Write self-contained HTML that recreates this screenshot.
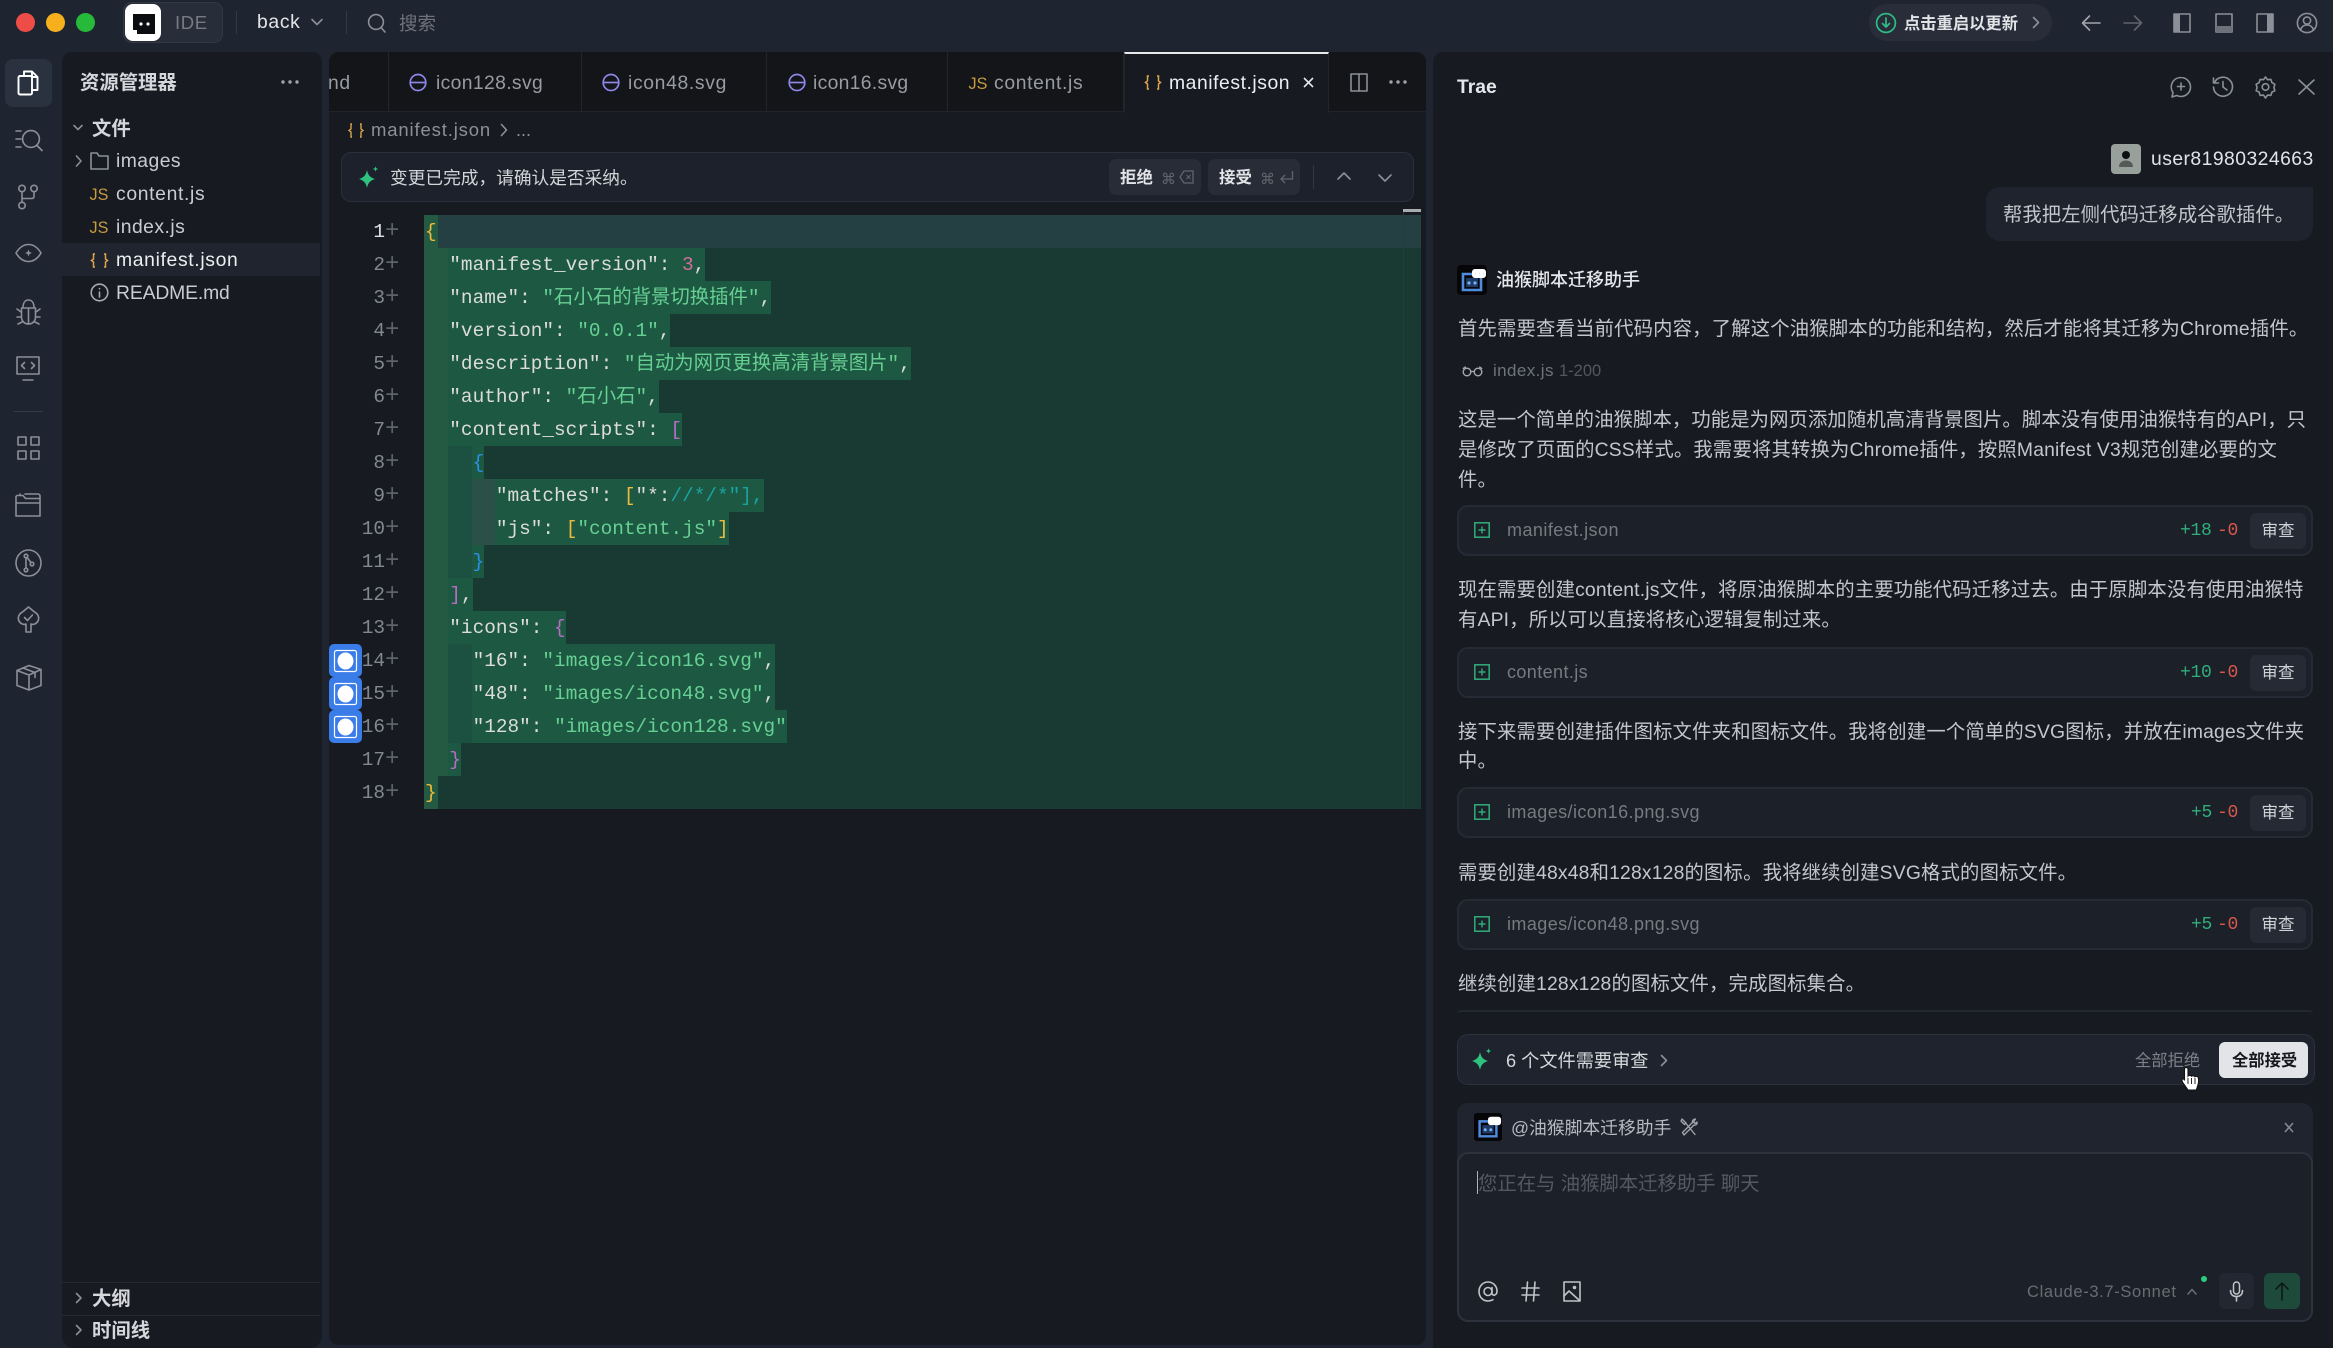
<!DOCTYPE html>
<html lang="zh">
<head>
<meta charset="utf-8">
<title>Trae</title>
<style>
html,body{margin:0;padding:0;width:2333px;height:1348px;overflow:hidden;background:#1e2530}
body{position:relative;font-family:"Liberation Sans","Noto Sans CJK SC",sans-serif;font-size:19.35px;color:#c9ccd2}
.b{position:absolute;box-sizing:border-box}
.t{position:absolute;white-space:nowrap;height:30px;line-height:30px;margin-top:-14px}
.la{margin-top:-15px}
svg{position:absolute;overflow:visible}
.s{fill:none;stroke:#8b8f97;stroke-width:1.6;stroke-linecap:round;stroke-linejoin:round}
.f{letter-spacing:.65px;margin-top:-15px}
.w{font-weight:700}
.l{position:absolute;left:424px;height:33px;line-height:35px;white-space:pre;font-family:"Liberation Mono","Noto Sans CJK SC",monospace;font-size:19.4px;color:#dcdcdc;display:flex}
.l span.c{display:block;background:#1d5842;padding-left:1px;height:33px}
.ind{display:block;height:33px}
.i0{width:24.3px;background:#245a41}
.i1{width:23.3px;background:#1c5040}
.i2{width:23.3px;background:#2b5048}
.g{color:#66d093}.y{color:#edb93f}.p{color:#b76cc4}.u{color:#2a8fe6}.n{color:#d0709a}.q{color:#1aa3a3}
.ln{position:absolute;left:340px;width:45px;text-align:right;height:33px;line-height:35px;font-family:"Liberation Mono",monospace;font-size:19.4px;color:#83878e}
.pl{position:absolute;left:385px;height:33px;line-height:34px;font-family:"Liberation Mono",monospace;font-size:24px;color:#5e626a}
.card{position:absolute;left:1457px;width:856px;height:51px;box-sizing:border-box;background:#1c2029;border:2px solid #252a35;border-radius:11px}
.rv{position:absolute;left:2250px;width:56px;height:36px;background:#262a35;border-radius:6px;font-size:16.5px;line-height:36px;text-align:center;color:#d0d2d6}
.tab{position:absolute;top:52px;height:60px;box-sizing:border-box;border-right:1px solid #22252b}
.tt{color:#989ba1}
.m{font-family:"Liberation Mono",monospace;font-size:19px}
.ct{color:#c3c6cb;letter-spacing:.17px}
</style>
</head>
<body>

<!-- title bar -->
<div class="b" style="left:16px;top:13px;width:19px;height:19px;border-radius:50%;background:#ee4c47"></div>
<div class="b" style="left:46px;top:13px;width:19px;height:19px;border-radius:50%;background:#f6b01e"></div>
<div class="b" style="left:76px;top:13px;width:19px;height:19px;border-radius:50%;background:#27b93a"></div>
<div class="b" style="left:123px;top:2px;width:100px;height:41px;border-radius:9px;background:#282e39;border:1px solid #323844"></div>
<div class="b" style="left:125px;top:4px;width:36px;height:37px;border-radius:8px;background:#fff"></div>
<svg style="left:125px;top:4px" width="36" height="37" viewBox="0 0 36 37"><path d="M8 10h22v20H12v-4H8z" fill="#0c0d10"/><rect x="12" y="14" width="14" height="11" fill="#0c0d10"/><circle cx="16" cy="20" r="1.600" fill="#fff"/><circle cx="23" cy="20" r="1.600" fill="#fff"/></svg>
<div class="t la" style="left:175px;top:23px;font-size:18.5px;color:#767a82;letter-spacing:.6px">IDE</div>
<div class="b" style="left:236px;top:11px;width:1px;height:23px;background:#343a45"></div>
<div class="t f" style="left:257px;top:22px;color:#e4e5e8">back</div>
<svg style="left:311px;top:18px" width="12" height="8" viewBox="0 0 12 8"><path class="s" d="M1 1.5l5 5 5-5"/></svg>
<div class="b" style="left:346px;top:11px;width:1px;height:23px;background:#343a45"></div>
<svg style="left:367px;top:12px" width="20" height="22" viewBox="0 0 20 22"><circle class="s" cx="9" cy="10" r="7.4"/><path class="s" d="M14.5 16l3.5 4"/></svg>
<div class="t" style="left:399px;top:23px;font-size:18.5px;color:#6e727a">搜索</div>

<div class="b" style="left:1869px;top:4px;width:183px;height:37px;border-radius:18px;background:#282d39"></div>
<svg style="left:1875px;top:12px" width="22" height="22" viewBox="0 0 22 22"><circle cx="11" cy="11" r="9.4" fill="none" stroke="#2ebd85" stroke-width="1.7"/><path d="M11 6v9M7.5 11.5L11 15l3.5-3.5" fill="none" stroke="#2ebd85" stroke-width="1.7" stroke-linecap="round"/></svg>
<div class="t" style="left:1904px;top:23px;font-size:16.3px;font-weight:600;color:#e2e3e6">点击重启以更新</div>
<svg style="left:2032px;top:16px" width="8" height="13" viewBox="0 0 8 13"><path class="s" d="M1.5 1.5l5 5-5 5"/></svg>
<svg style="left:2081px;top:14px" width="20" height="18" viewBox="0 0 20 18"><path class="s" stroke-width="1.8" style="stroke:#a2a5ab" d="M19 9H2M8.5 2L1.5 9l7 7"/></svg>
<svg style="left:2123px;top:14px" width="20" height="18" viewBox="0 0 20 18"><path class="s" style="stroke:#5f636b" d="M1 9h17M11.5 2l7 7-7 7"/></svg>
<svg style="left:2173px;top:13px" width="18" height="20" viewBox="0 0 18 20"><rect class="s" x="1" y="1" width="16" height="18"/><rect x="1" y="1" width="6" height="18" fill="#8b8f97"/></svg>
<svg style="left:2215px;top:13px" width="18" height="20" viewBox="0 0 18 20"><rect class="s" x="1" y="1" width="16" height="18"/><rect x="1" y="13" width="16" height="6" fill="#6d7179"/></svg>
<svg style="left:2256px;top:13px" width="18" height="20" viewBox="0 0 18 20"><rect class="s" x="1" y="1" width="16" height="18"/><rect x="11" y="1" width="6" height="18" fill="#8b8f97"/></svg>
<svg style="left:2296px;top:12px" width="22" height="22" viewBox="0 0 22 22"><circle class="s" cx="11" cy="11" r="9.6"/><circle class="s" cx="11" cy="8.5" r="3.6"/><path class="s" d="M4.5 18c1-3.5 3.5-5 6.5-5s5.500 1.500 6.500 5"/></svg>

<!-- activity bar -->
<div class="b" style="left:5px;top:59px;width:47px;height:48px;border-radius:8px;background:#2a3240"></div>
<svg style="left:17px;top:70px" width="22" height="26" viewBox="0 0 22 26"><path d="M7 6V1.500h8l5.500 5.500v13H15" fill="none" stroke="#fff" stroke-width="1.900" stroke-linejoin="round"/><path d="M15 1.500V7h5.500" fill="none" stroke="#fff" stroke-width="1.900"/><rect x="1.500" y="6" width="13.500" height="18.500" rx="1.500" fill="none" stroke="#fff" stroke-width="1.900"/></svg>
<svg style="left:15px;top:127px" width="28" height="26" viewBox="0 0 28 26"><path class="s" stroke-width="1.800" d="M1 4h5M1 12h5M1 20h5"/><circle class="s" cx="16" cy="12" r="8.400"/><path class="s" d="M22 18.500l5 5"/></svg>
<svg style="left:17px;top:184px" width="22" height="26" viewBox="0 0 22 26"><circle class="s" cx="5" cy="4.500" r="3.200"/><circle class="s" cx="17" cy="4.500" r="3.200"/><circle class="s" cx="5" cy="21.500" r="3.200"/><path class="s" d="M5 8v10M17 8v4.500a2 2 0 0 1-2 2H5"/></svg>
<svg style="left:15px;top:243px" width="27" height="20" viewBox="0 0 27 20"><path class="s" stroke-width="1.800" d="M1 10c3-5 7-8.500 12.500-8.500S23 5 26 10c-3 5-7 8.500-12.500 8.500S4 15 1 10z"/><path d="M13.500 6.500l1 2.500 2.500 1-2.500 1-1 2.500-1-2.500-2.500-1 2.500-1z" fill="#8b8f97"/></svg>
<svg style="left:16px;top:299px" width="25" height="26" viewBox="0 0 25 26"><path class="s" d="M7 9c0-5 2-8 5.500-8S18 4 18 9M5.500 9h14v9c0 4-3 7-7 7s-7-3-7-7zM12.500 9v16M5 13l-4-3M20 13l4-3M5 18H1M20 18h4M6 23l-4 2M19 23l4 2"/></svg>
<svg style="left:16px;top:356px" width="24" height="26" viewBox="0 0 24 26"><rect class="s" x="1" y="1" width="22" height="17"/><path class="s" d="M8.500 6.500l-3 3 3 3M15.500 6.500l3 3-3 3M7 24h10"/></svg>
<div class="b" style="left:14px;top:411px;width:29px;height:1px;background:#353b46"></div>
<svg style="left:17px;top:436px" width="23" height="24" viewBox="0 0 23 24"><rect class="s" x="1" y="1" width="8" height="8"/><rect class="s" x="14" y="1" width="8" height="8"/><rect class="s" x="1" y="15" width="8" height="8"/><rect class="s" x="14" y="15" width="8" height="8"/></svg>
<svg style="left:15px;top:493px" width="27" height="24" viewBox="0 0 27 24"><path class="s" d="M1 7V4a1.500 1.500 0 0 1 1.500-1.500H8l2.500 3H25V23H1zM1 10h24M5 2V1M10 1h13a2 2 0 0 1 2 2v3"/></svg>
<svg style="left:15px;top:549px" width="27" height="28" viewBox="0 0 27 28"><ellipse class="s" cx="13.500" cy="14" rx="12.500" ry="13"/><circle class="s" cx="11" cy="7" r="1.800"/><circle class="s" cx="11" cy="21" r="1.800"/><circle class="s" cx="17" cy="15" r="1.800"/><path class="s" d="M11 9v10M12.500 9l3.500 4.500"/></svg>
<svg style="left:16px;top:606px" width="25" height="28" viewBox="0 0 25 28"><path class="s" d="M12.500 1l6 5c4 2 5 6 3.500 9-1.500 3-5 4-7 3v8h-5v-8c-2 1-5.500 0-7-3C1.500 12 2.500 8 6.500 6z"/><path class="s" d="M8.500 11.500l3 3 5-5.500"/></svg>
<svg style="left:16px;top:664px" width="26" height="27" viewBox="0 0 26 27"><path class="s" d="M1 6.500L13 1.500l12 4v16L13 26 1 21.500zM1 6.500L13 11l12-5.500M13 11v15M7 4l12 4.500v5"/></svg>

<!-- explorer -->
<div class="b" style="left:62px;top:52px;width:260px;height:1296px;border-radius:10px 10px 12px 12px;background:#171a21"></div>
<div class="t" style="left:80px;top:82px;font-weight:600;color:#d5d7db">资源管理器</div>
<svg style="left:280px;top:79px" width="20" height="6" viewBox="0 0 20 6"><circle cx="3" cy="3" r="1.700" fill="#a0a3a9"/><circle cx="10" cy="3" r="1.700" fill="#a0a3a9"/><circle cx="17" cy="3" r="1.700" fill="#a0a3a9"/></svg>
<svg style="left:73px;top:124px" width="10" height="8" viewBox="0 0 10 8"><path class="s" d="M1 1.500l4 4 4-4"/></svg>
<div class="t w" style="left:92px;top:128px;color:#d5d7db">文件</div>
<svg style="left:75px;top:154px" width="8" height="14" viewBox="0 0 8 14"><path class="s" d="M1.500 2l4.500 5-4.500 5"/></svg>
<svg style="left:90px;top:152px" width="19" height="18" viewBox="0 0 19 18"><path class="s" d="M1 1h6l2 3h9v13H1z"/></svg>
<div class="t f" style="left:116px;top:161px;color:#c9ccd1;letter-spacing:.45px">images</div>
<div class="t la" style="left:89px;top:195px;color:#c69c3f;font-size:17px;transform:scaleX(.95)">JS</div>
<div class="t f" style="left:116px;top:194px;color:#c9ccd1">content.js</div>
<div class="t la" style="left:89px;top:228px;color:#c69c3f;font-size:17px;transform:scaleX(.95)">JS</div>
<div class="t f" style="left:116px;top:227px;color:#c9ccd1;letter-spacing:.45px">index.js</div>
<div class="b" style="left:62px;top:243px;width:258px;height:33px;background:#20242f"></div>
<svg style="left:90px;top:253px" width="19" height="15" viewBox="0 0 19 15"><path d="M5 1H3.500v5L1.500 7.500l2 1.500v5H5M14 1h1.500v5l2 1.500-2 1.500v5H14" fill="none" stroke="#dca54a" stroke-width="1.500"/></svg>
<div class="t f" style="left:116px;top:260px;color:#eceef0">manifest.json</div>
<svg style="left:90px;top:283px" width="19" height="19" viewBox="0 0 19 19"><circle class="s" cx="9.500" cy="9.500" r="8.300" style="stroke:#a6a9af"/><path class="s" style="stroke:#a6a9af" d="M9.500 9v5M9.500 5.500v.3"/></svg>
<div class="t f" style="left:116px;top:293px;color:#c9ccd1;letter-spacing:-.15px">README.md</div>
<div class="b" style="left:62px;top:1282px;width:258px;height:1px;background:#252932"></div>
<svg style="left:75px;top:1292px" width="8" height="12" viewBox="0 0 8 12"><path class="s" d="M1.500 1.500l4.500 4.500-4.500 4.500"/></svg>
<div class="t w" style="left:92px;top:1298px;color:#d5d7db">大纲</div>
<div class="b" style="left:62px;top:1315px;width:258px;height:1px;background:#252932"></div>
<svg style="left:75px;top:1324px" width="8" height="12" viewBox="0 0 8 12"><path class="s" d="M1.500 1.500l4.500 4.500-4.500 4.500"/></svg>
<div class="t w" style="left:92px;top:1330px;color:#d5d7db">时间线</div>

<!-- editor -->
<div class="b" style="left:329px;top:52px;width:1097px;height:1293px;border-radius:10px;background:#171a21;overflow:hidden"></div>
<div class="b" style="left:329px;top:52px;width:1097px;height:60px;border-radius:10px 10px 0 0;background:#141518;border-bottom:1px solid #20232a"></div>
<div class="tab" style="left:329px;width:60px"></div>
<div class="t tt f" style="left:328px;top:83px">nd</div>
<div class="tab" style="left:389px;width:193px"></div>
<svg style="left:409px;top:73px" width="18" height="19" viewBox="0 0 18 19"><ellipse cx="9" cy="9.500" rx="7.800" ry="8" fill="none" stroke="#8e86e8" stroke-width="1.700"/><path d="M1.500 9.500h15" stroke="#8e86e8" stroke-width="1.700"/></svg>
<div class="t tt f" style="left:436px;top:83px;letter-spacing:.35px">icon128.svg</div>
<div class="tab" style="left:582px;width:185px"></div>
<svg style="left:602px;top:73px" width="18" height="19" viewBox="0 0 18 19"><ellipse cx="9" cy="9.500" rx="7.800" ry="8" fill="none" stroke="#8e86e8" stroke-width="1.700"/><path d="M1.500 9.500h15" stroke="#8e86e8" stroke-width="1.700"/></svg>
<div class="t tt f" style="left:628px;top:83px">icon48.svg</div>
<div class="tab" style="left:767px;width:181px"></div>
<svg style="left:788px;top:73px" width="18" height="19" viewBox="0 0 18 19"><ellipse cx="9" cy="9.500" rx="7.800" ry="8" fill="none" stroke="#8e86e8" stroke-width="1.700"/><path d="M1.500 9.500h15" stroke="#8e86e8" stroke-width="1.700"/></svg>
<div class="t tt f" style="left:813px;top:83px;letter-spacing:.3px">icon16.svg</div>
<div class="tab" style="left:948px;width:176px"></div>
<div class="t la" style="left:968px;top:84px;color:#c69c3f;font-size:17px;transform:scaleX(.95)">JS</div>
<div class="t tt f" style="left:994px;top:83px">content.js</div>
<div class="b" style="left:1124px;top:52px;width:205px;height:61px;background:#171a21;border-top:2px solid #e8e9eb;border-right:1px solid #22252b;border-left:1px solid #22252b"></div>
<svg style="left:1144px;top:75px" width="18" height="15" viewBox="0 0 18 15"><path d="M5 1H3.500v5L1.500 7.500l2 1.500v5H5M13 1h1.500v5l2 1.500-2 1.500v5H13" fill="none" stroke="#dca54a" stroke-width="1.500"/></svg>
<div class="t f" style="left:1169px;top:83px;color:#eceef0;letter-spacing:.55px">manifest.json</div>
<svg style="left:1303px;top:77px" width="11" height="11" viewBox="0 0 11 11"><path d="M1 1l9 9M10 1l-9 9" stroke="#e4e5e8" stroke-width="1.600"/></svg>
<svg style="left:1350px;top:73px" width="18" height="19" viewBox="0 0 18 19"><rect class="s" x="1" y="1" width="16" height="17"/><path class="s" d="M9 1v17"/></svg>
<svg style="left:1388px;top:79px" width="20" height="6" viewBox="0 0 20 6"><circle cx="3" cy="3" r="1.700" fill="#a0a3a9"/><circle cx="10" cy="3" r="1.700" fill="#a0a3a9"/><circle cx="17" cy="3" r="1.700" fill="#a0a3a9"/></svg>

<!-- breadcrumb -->
<svg style="left:348px;top:123px" width="16" height="15" viewBox="0 0 16 15"><path d="M4 1H3v5L1 7.500 3 9v5h1M12 1h1v5l2 1.500L13 9v5h-1" fill="none" stroke="#dca54a" stroke-width="1.400"/></svg>
<div class="t f" style="left:371px;top:130px;color:#8d9097;font-size:18.500px;letter-spacing:.85px">manifest.json</div>
<svg style="left:500px;top:123px" width="8" height="14" viewBox="0 0 8 14"><path class="s" d="M1.500 1.500l5 5.500-5 5.500"/></svg>
<div class="t la" style="left:516px;top:130px;color:#8d9097;font-size:18px">...</div>

<!-- notice -->
<div class="b" style="left:341px;top:152px;width:1073px;height:50px;border-radius:10px;background:#1d212c;border:1px solid #2a2f3a"></div>
<svg style="left:358px;top:166px" width="22" height="22" viewBox="0 0 22 22"><path d="M9 4c1 5 3 7.500 8 9-5 1.500-7 4-8 9-1-5-3-7.500-8-9 5-1.500 7-4 8-9z" fill="#2ec27e"/><path d="M17.500 0c.3 2 1 2.700 3 3-2 .3-2.700 1-3 3-.3-2-1-2.700-3-3 2-.3 2.700-1 3-3z" fill="#2ec27e"/></svg>
<div class="t" style="left:390px;top:177px;font-size:17.700px;color:#d3d5d9">变更已完成，请确认是否采纳。</div>
<div class="b" style="left:1109px;top:159px;width:92px;height:36px;border-radius:7px;background:#282c37"></div>
<div class="t w" style="left:1120px;top:177px;font-size:16.500px;color:#e3e4e7">拒绝</div>
<div class="t" style="left:1161px;top:178px;font-size:15px;color:#60646c;font-family:'DejaVu Sans',sans-serif">⌘</div>
<svg style="left:1179px;top:169px" width="15" height="16" viewBox="0 0 15 16"><path d="M5 2h9v12H5L1 8z" fill="none" stroke="#60646c" stroke-width="1.300"/><path d="M7.500 6l4 4M11.500 6l-4 4" stroke="#60646c" stroke-width="1"/></svg>
<div class="b" style="left:1208px;top:159px;width:92px;height:36px;border-radius:7px;background:#282c37"></div>
<div class="t w" style="left:1219px;top:177px;font-size:16.500px;color:#e3e4e7">接受</div>
<div class="t" style="left:1260px;top:178px;font-size:15px;color:#60646c;font-family:'DejaVu Sans',sans-serif">⌘</div>
<svg style="left:1279px;top:169px" width="15" height="16" viewBox="0 0 15 16"><path d="M13.500 2v8H2M6 6l-4 4 4 4" fill="none" stroke="#60646c" stroke-width="1.300"/></svg>
<div class="b" style="left:1313px;top:165px;width:1px;height:24px;background:#323742"></div>
<svg style="left:1337px;top:172px" width="14" height="8" viewBox="0 0 14 8"><path class="s" d="M1 7l6-6 6 6"/></svg>
<svg style="left:1378px;top:174px" width="14" height="8" viewBox="0 0 14 8"><path class="s" d="M1 1l6 6 6-6"/></svg>

<!-- code -->
<div class="b" style="left:424px;top:215px;width:997px;height:594px;background:#193a33"></div>
<div class="b" style="left:424px;top:215px;width:997px;height:33px;background:#254042"></div>
<div class="b" style="left:1403px;top:209px;width:18px;height:3px;background:#a8abb0"></div>
<div class="b" style="left:1403px;top:212px;width:1px;height:597px;background:#1e4038"></div>

<div class="l" style="top:215px"><span class="c" style="background:#245a41;padding:0 1px"><b style="font-weight:400" class="y">{</b></span></div>
<div class="l" style="top:248px"><span class="ind i0"></span><span class="c">"manifest_version": <b style="font-weight:400" class="n">3</b>,</span></div>
<div class="l" style="top:281px"><span class="ind i0"></span><span class="c">"name": <b style="font-weight:400" class="g">"石小石的背景切换插件"</b>,</span></div>
<div class="l" style="top:314px"><span class="ind i0"></span><span class="c">"version": <b style="font-weight:400" class="g">"0.0.1"</b>,</span></div>
<div class="l" style="top:347px"><span class="ind i0"></span><span class="c">"description": <b style="font-weight:400" class="g">"自动为网页更换高清背景图片"</b>,</span></div>
<div class="l" style="top:380px"><span class="ind i0"></span><span class="c">"author": <b style="font-weight:400" class="g">"石小石"</b>,</span></div>
<div class="l" style="top:413px"><span class="ind i0"></span><span class="c">"content_scripts": <b style="font-weight:400" class="p">[</b></span></div>
<div class="l" style="top:446px"><span class="ind i0"></span><span class="ind i1"></span><span class="c"><b style="font-weight:400" class="u">{</b></span></div>
<div class="l" style="top:479px"><span class="ind i0"></span><span class="ind i1"></span><span class="ind i2"></span><span class="c">"matches": <b style="font-weight:400" class="y">[</b>"*:<b style="font-weight:400" class="q">//*/*"],</b></span></div>
<div class="l" style="top:512px"><span class="ind i0"></span><span class="ind i1"></span><span class="ind i2"></span><span class="c">"js": <b style="font-weight:400" class="y">[</b><b style="font-weight:400" class="g">"content.js"</b><b style="font-weight:400" class="y">]</b></span></div>
<div class="l" style="top:545px"><span class="ind i0"></span><span class="ind i1"></span><span class="c"><b style="font-weight:400" class="u">}</b></span></div>
<div class="l" style="top:578px"><span class="ind i0"></span><span class="c"><b style="font-weight:400" class="p">]</b>,</span></div>
<div class="l" style="top:611px"><span class="ind i0"></span><span class="c">"icons": <b style="font-weight:400" class="p">{</b></span></div>
<div class="l" style="top:644px"><span class="ind i0"></span><span class="ind i1"></span><span class="c">"16": <b style="font-weight:400" class="g">"images/icon16.svg"</b>,</span></div>
<div class="l" style="top:677px"><span class="ind i0"></span><span class="ind i1"></span><span class="c">"48": <b style="font-weight:400" class="g">"images/icon48.svg"</b>,</span></div>
<div class="l" style="top:710px"><span class="ind i0"></span><span class="ind i1"></span><span class="c">"128": <b style="font-weight:400" class="g">"images/icon128.svg"</b></span></div>
<div class="l" style="top:743px"><span class="ind i0"></span><span class="c"><b style="font-weight:400" class="p">}</b></span></div>
<div class="l" style="top:776px"><span class="c" style="background:#245a41;padding:0 1px"><b style="font-weight:400" class="y">}</b></span></div>

<div class="ln" style="top:215px;color:#e0e1e4">1</div><div class="pl" style="top:215px">+</div>
<div class="ln" style="top:248px">2</div><div class="pl" style="top:248px">+</div>
<div class="ln" style="top:281px">3</div><div class="pl" style="top:281px">+</div>
<div class="ln" style="top:314px">4</div><div class="pl" style="top:314px">+</div>
<div class="ln" style="top:347px">5</div><div class="pl" style="top:347px">+</div>
<div class="ln" style="top:380px">6</div><div class="pl" style="top:380px">+</div>
<div class="ln" style="top:413px">7</div><div class="pl" style="top:413px">+</div>
<div class="ln" style="top:446px">8</div><div class="pl" style="top:446px">+</div>
<div class="ln" style="top:479px">9</div><div class="pl" style="top:479px">+</div>
<div class="ln" style="top:512px">10</div><div class="pl" style="top:512px">+</div>
<div class="ln" style="top:545px">11</div><div class="pl" style="top:545px">+</div>
<div class="ln" style="top:578px">12</div><div class="pl" style="top:578px">+</div>
<div class="ln" style="top:611px">13</div><div class="pl" style="top:611px">+</div>
<div class="ln" style="top:644px">14</div><div class="pl" style="top:644px">+</div>
<div class="ln" style="top:677px">15</div><div class="pl" style="top:677px">+</div>
<div class="ln" style="top:710px">16</div><div class="pl" style="top:710px">+</div>
<div class="ln" style="top:743px">17</div><div class="pl" style="top:743px">+</div>
<div class="ln" style="top:776px">18</div><div class="pl" style="top:776px">+</div>

<!-- blue markers -->
<svg style="left:329px;top:644px" width="33" height="33" viewBox="0 0 33 33"><rect width="33" height="33" rx="5" fill="#3a7ce8"/><rect x="5.500" y="6.500" width="22" height="21" rx="2" fill="none" stroke="#fff" stroke-width="1.200"/><ellipse cx="16.500" cy="17" rx="8" ry="8.500" fill="#fff"/></svg>
<svg style="left:329px;top:677px" width="33" height="33" viewBox="0 0 33 33"><rect width="33" height="33" rx="5" fill="#3a7ce8"/><rect x="5.500" y="6.500" width="22" height="21" rx="2" fill="none" stroke="#fff" stroke-width="1.200"/><ellipse cx="16.500" cy="17" rx="8" ry="8.500" fill="#fff"/></svg>
<svg style="left:329px;top:710px" width="33" height="33" viewBox="0 0 33 33"><rect width="33" height="33" rx="5" fill="#3a7ce8"/><rect x="5.500" y="6.500" width="22" height="21" rx="2" fill="none" stroke="#fff" stroke-width="1.200"/><ellipse cx="16.500" cy="17" rx="8" ry="8.500" fill="#fff"/></svg>

<!-- chat -->
<div class="b" style="left:1433px;top:52px;width:900px;height:1296px;border-radius:10px 0 0 0;background:#171a21"></div>
<div class="t w la" style="left:1457px;top:87px;color:#e6e7ea">Trae</div>
<svg style="left:2170px;top:76px" width="22" height="23" viewBox="0 0 22 23"><path class="s" d="M11 1.500a9.500 9.500 0 0 1 0 19c-1.500 0-3-.4-4.300-1L2 21l1-4.500A9.500 9.500 0 0 1 11 1.500zM11 7v7M7.500 10.500h7"/></svg>
<svg style="left:2212px;top:76px" width="22" height="22" viewBox="0 0 22 22"><path class="s" d="M1.500 2v5h5M2.500 6.500A9.500 9.500 0 1 1 1.500 11M11 5.500V11l4 3"/></svg>
<svg style="left:2255px;top:76px" width="21" height="22" viewBox="0 0 21 22"><path class="s" d="M10.500 1l2 2.700 3.400-.3 1 3.200 3 1.700-1 3.200 1 3.200-3 1.400-1 3.300-3.400-.3-2 2.900-2-2.900-3.400.3-1-3.300-3-1.400 1-3.200-1-3.200 3-1.700 1-3.200 3.400.3z"/><circle class="s" cx="10.500" cy="11" r="3.300"/></svg>
<svg style="left:2298px;top:79px" width="17" height="16" viewBox="0 0 17 16"><path class="s" d="M1 1l15 14M16 1L1 15"/></svg>

<div class="b" style="left:2111px;top:144px;width:30px;height:30px;border-radius:4px;background:#97a09b"></div>
<svg style="left:2111px;top:144px" width="30" height="30" viewBox="0 0 30 30"><circle cx="15" cy="11" r="4" fill="#0d0f12"/><path d="M8 23c0-4 3-6.500 7-6.500s7 2.500 7 6.500z" fill="#545a58"/></svg>
<div class="t f" style="left:2151px;top:159px;color:#e2e3e6;letter-spacing:.45px">user81980324663</div>
<div class="b" style="left:1986px;top:187px;width:327px;height:54px;border-radius:14px 0 14px 14px;background:#1f232e"></div>
<div class="t ct" style="left:2003px;top:214px;letter-spacing:.07px">帮我把左侧代码迁移成谷歌插件。</div>

<div class="b" style="left:1457px;top:265px;width:30px;height:30px;border-radius:4px;background:#060608"></div>
<svg style="left:1457px;top:265px" width="30" height="30" viewBox="0 0 30 30"><path d="M6 9h18v16H6z" fill="none" stroke="#4f8ce0" stroke-width="2.600"/><rect x="9" y="13" width="12" height="9" fill="#1d3b66"/><circle cx="12" cy="18" r="1.600" fill="#7fb0ee"/><circle cx="18" cy="18" r="1.600" fill="#7fb0ee"/><rect x="15" y="4" width="14" height="9" rx="3" fill="#fff"/><path d="M18 8.500h.1M22 8.500h.1M26 8.500h.1" stroke="#333" stroke-width="2"/></svg>
<div class="t" style="left:1496px;top:279px;font-size:18px;font-weight:500;color:#e6e7ea">油猴脚本迁移助手</div>

<div class="t ct" style="left:1458px;top:328px">首先需要查看当前代码内容，了解这个油猴脚本的功能和结构，然后才能将其迁移为Chrome插件。</div>

<svg style="left:1462px;top:366px" width="21" height="11" viewBox="0 0 21 11"><circle cx="5" cy="6" r="3.800" fill="none" stroke="#a7aaaf" stroke-width="1.400"/><circle cx="16" cy="6" r="3.800" fill="none" stroke="#a7aaaf" stroke-width="1.400"/><path d="M1 3c1-1.500 2-2 3-2M20 3c-1-1.500-2-2-3-2M8.800 5.500h3.400" fill="none" stroke="#a7aaaf" stroke-width="1.300"/></svg>
<div class="t la" style="left:1493px;top:371px;font-size:17px;color:#6f737a;letter-spacing:.4px">index.js</div>
<div class="t la" style="left:1559px;top:371px;font-size:16.500px;color:#54575e">1-200</div>

<div class="t ct" style="left:1458px;top:419px;letter-spacing:.1px">这是一个简单的油猴脚本，功能是为网页添加随机高清背景图片。脚本没有使用油猴特有的API，只</div>
<div class="t ct" style="left:1458px;top:449px">是修改了页面的CSS样式。我需要将其转换为Chrome插件，按照Manifest V3规范创建必要的文</div>
<div class="t ct" style="left:1458px;top:479px">件。</div>

<div class="card" style="top:505px"></div>
<svg style="left:1474px;top:522px" width="16" height="16" viewBox="0 0 16 16"><rect x=".8" y=".8" width="14.400" height="14.400" fill="none" stroke="#2fae7b" stroke-width="1.500"/><path d="M8 4.500v7M4.500 8h7" stroke="#2fae7b" stroke-width="1.400"/></svg>
<div class="t la" style="left:1507px;top:530px;font-size:18px;color:#767a81;letter-spacing:.45px">manifest.json</div>
<div class="t m" style="left:2180px;top:530px;color:#2fae7b;font-size:18px;letter-spacing:-.3px">+18</div>
<div class="t m" style="left:2217px;top:530px;color:#d8574a;font-size:18px;letter-spacing:-.3px">-0</div>
<div class="rv" style="top:513px">审查</div>

<div class="t ct" style="left:1458px;top:589px">现在需要创建content.js文件，将原油猴脚本的主要功能代码迁移过去。由于原脚本没有使用油猴特</div>
<div class="t ct" style="left:1458px;top:619px">有API，所以可以直接将核心逻辑复制过来。</div>

<div class="card" style="top:647px"></div>
<svg style="left:1474px;top:664px" width="16" height="16" viewBox="0 0 16 16"><rect x=".8" y=".8" width="14.400" height="14.400" fill="none" stroke="#2fae7b" stroke-width="1.500"/><path d="M8 4.500v7M4.500 8h7" stroke="#2fae7b" stroke-width="1.400"/></svg>
<div class="t la" style="left:1507px;top:672px;font-size:18px;color:#767a81;letter-spacing:.4px">content.js</div>
<div class="t m" style="left:2180px;top:672px;color:#2fae7b;font-size:18px;letter-spacing:-.3px">+10</div>
<div class="t m" style="left:2217px;top:672px;color:#d8574a;font-size:18px;letter-spacing:-.3px">-0</div>
<div class="rv" style="top:655px">审查</div>

<div class="t ct" style="left:1458px;top:731px">接下来需要创建插件图标文件夹和图标文件。我将创建一个简单的SVG图标，并放在images文件夹</div>
<div class="t ct" style="left:1458px;top:760px">中。</div>

<div class="card" style="top:787px"></div>
<svg style="left:1474px;top:804px" width="16" height="16" viewBox="0 0 16 16"><rect x=".8" y=".8" width="14.400" height="14.400" fill="none" stroke="#2fae7b" stroke-width="1.500"/><path d="M8 4.500v7M4.500 8h7" stroke="#2fae7b" stroke-width="1.400"/></svg>
<div class="t la" style="left:1507px;top:812px;font-size:18px;color:#767a81;letter-spacing:.42px">images/icon16.png.svg</div>
<div class="t m" style="left:2191px;top:812px;color:#2fae7b;font-size:18px;letter-spacing:-.3px">+5</div>
<div class="t m" style="left:2217px;top:812px;color:#d8574a;font-size:18px;letter-spacing:-.3px">-0</div>
<div class="rv" style="top:795px">审查</div>

<div class="t ct" style="left:1458px;top:872px">需要创建48x48和128x128的图标。我将继续创建SVG格式的图标文件。</div>

<div class="card" style="top:899px"></div>
<svg style="left:1474px;top:916px" width="16" height="16" viewBox="0 0 16 16"><rect x=".8" y=".8" width="14.400" height="14.400" fill="none" stroke="#2fae7b" stroke-width="1.500"/><path d="M8 4.500v7M4.500 8h7" stroke="#2fae7b" stroke-width="1.400"/></svg>
<div class="t la" style="left:1507px;top:924px;font-size:18px;color:#767a81;letter-spacing:.42px">images/icon48.png.svg</div>
<div class="t m" style="left:2191px;top:924px;color:#2fae7b;font-size:18px;letter-spacing:-.3px">+5</div>
<div class="t m" style="left:2217px;top:924px;color:#d8574a;font-size:18px;letter-spacing:-.3px">-0</div>
<div class="rv" style="top:907px">审查</div>

<div class="t ct" style="left:1458px;top:983px">继续创建128x128的图标文件，完成图标集合。</div>

<div class="b" style="left:1457px;top:1010px;width:856px;height:4px;border-radius:8px 8px 0 0;border-top:2px solid #232732"></div>

<!-- review bar -->
<div class="b" style="left:1457px;top:1034px;width:858px;height:51px;border-radius:11px;background:#1e232e;border:1px solid #2c313d"></div>
<svg style="left:1471px;top:1048px" width="22" height="22" viewBox="0 0 22 22"><path d="M9 4c1 5 3 7.500 8 9-5 1.500-7 4-8 9-1-5-3-7.500-8-9 5-1.500 7-4 8-9z" fill="#2ec27e"/><path d="M17.500 0c.3 2 1 2.700 3 3-2 .3-2.700 1-3 3-.3-2-1-2.700-3-3 2-.3 2.700-1 3-3z" fill="#2ec27e"/></svg>
<div class="t" style="left:1506px;top:1060px;font-size:18.200px;color:#d5d7db">6 个文件需要审查</div>
<svg style="left:1660px;top:1054px" width="8" height="13" viewBox="0 0 8 13"><path class="s" d="M1.500 1.500l5 5-5 5"/></svg>
<div class="t" style="left:2135px;top:1060px;font-size:16.300px;color:#7d8087">全部拒绝</div>
<div class="b" style="left:2219px;top:1042px;width:89px;height:36px;border-radius:6px;background:#e3e4e8"></div>
<div class="t" style="left:2232px;top:1060px;font-size:16.300px;font-weight:600;color:#15171c">全部接受</div>
<svg style="left:2180px;top:1066px" width="23" height="25" viewBox="0 0 23 25"><path d="M6 1.500c1.200 0 2 .8 2 2V10c.5-.7 3-.7 3.500.2.600-.7 3-.5 3.500.5.700-.6 3-.3 3.300 1 .5 2 .2 6-1 9.300l-1 3H8l-5-7c-1-1.500-1.500-3.500-.5-4 1-.4 2 .5 2 1.500V3.500c0-1.200.4-2 1.500-2z" fill="#fff" stroke="#111" stroke-width="1.100"/><path d="M8 12v6M11.500 12v6M15 12v6" stroke="#111" stroke-width=".9"/></svg>

<!-- input -->
<div class="b" style="left:1457px;top:1103px;width:856px;height:219px;border-radius:11px;background:#20242f"></div>
<div class="b" style="left:1474px;top:1113px;width:28px;height:28px;border-radius:3px;background:#060608"></div>
<svg style="left:1474px;top:1113px" width="28" height="28" viewBox="0 0 30 30"><path d="M6 9h18v16H6z" fill="none" stroke="#4f8ce0" stroke-width="2.600"/><rect x="9" y="13" width="12" height="9" fill="#1d3b66"/><circle cx="12" cy="18" r="1.600" fill="#7fb0ee"/><circle cx="18" cy="18" r="1.600" fill="#7fb0ee"/><rect x="15" y="4" width="14" height="9" rx="3" fill="#fff"/></svg>
<div class="t" style="left:1511px;top:1127px;font-size:17.800px;color:#b7bac0">@油猴脚本迁移助手</div>
<svg style="left:1680px;top:1117px" width="18" height="20" viewBox="0 0 18 20"><path class="s" d="M2 2l4 4-1.500 1.500L1 4zM6 6.500l9 11M15.500 2c-2 0-3.500 1.500-3 3.500L2.500 15.500 4 18l10-10c2 .5 3.500-1 3-3l-2 1.500-1.500-1.500z" style="stroke:#a5a8ae;stroke-width:1.300"/></svg>
<svg style="left:2284px;top:1122px" width="10" height="11" viewBox="0 0 10 11"><path d="M1 1l8 9M9 1l-8 9" stroke="#82868d" stroke-width="1.600"/></svg>
<div class="b" style="left:1457px;top:1152px;width:856px;height:170px;border-radius:11px;background:#1c2029;border:2px solid #2d323d"></div>
<div class="b" style="left:1477px;top:1171px;width:1px;height:23px;background:#b0b3b8"></div>
<div class="t" style="left:1478px;top:1183px;font-size:19.350px;color:#555961">您正在与 油猴脚本迁移助手 聊天</div>
<svg style="left:1477px;top:1280px" width="22" height="23" viewBox="0 0 22 23"><circle class="s" style="stroke:#c0c3c8" cx="11" cy="11.500" r="4"/><path class="s" style="stroke:#c0c3c8" d="M15 7.500v6c0 2.500 5 2.500 5-2.500C20 6 16 2 11 2S2 6 2 11.500 6 21 11 21c2 0 3.500-.5 5-1.300"/></svg>
<svg style="left:1521px;top:1281px" width="19" height="21" viewBox="0 0 19 21"><path class="s" style="stroke:#c0c3c8" d="M6.500 1L5 20M14 1l-1.500 19M1 7h17M1 14h17"/></svg>
<svg style="left:1563px;top:1281px" width="18" height="21" viewBox="0 0 18 21"><rect class="s" style="stroke:#c0c3c8" x="1" y="1" width="16" height="19"/><circle cx="11.500" cy="6.500" r="1.800" fill="#c0c3c8"/><path class="s" style="stroke:#c0c3c8" d="M1 15l5-5 10 9"/></svg>
<div class="t la" style="left:2027px;top:1292px;font-size:16.500px;color:#686c73;letter-spacing:.65px">Claude-3.7-Sonnet</div>
<svg style="left:2187px;top:1288px" width="10" height="7" viewBox="0 0 10 7"><path class="s" style="stroke:#686c73" d="M1 6l4-4.500L9 6"/></svg>
<div class="b" style="left:2201px;top:1276px;width:6px;height:6px;border-radius:50%;background:#2dcb7c"></div>
<div class="b" style="left:2219px;top:1273px;width:35px;height:36px;border-radius:6px;background:#222731"></div>
<svg style="left:2229px;top:1281px" width="15" height="21" viewBox="0 0 15 21"><rect x="4.500" y="1" width="6" height="12" rx="3" fill="none" stroke="#c0c3c8" stroke-width="1.500"/><path class="s" style="stroke:#c0c3c8" d="M1.500 9.500c0 4 2.500 6 6 6s6-2 6-6M7.500 15.500V20"/></svg>
<div class="b" style="left:2264px;top:1273px;width:36px;height:36px;border-radius:6px;background:#1d4a3a"></div>
<svg style="left:2274px;top:1281px" width="16" height="20" viewBox="0 0 16 20"><path d="M8 19V2M2 8l6-6 6 6" fill="none" stroke="#0c1512" stroke-width="1.500" stroke-linecap="round"/></svg>

</body>
</html>
